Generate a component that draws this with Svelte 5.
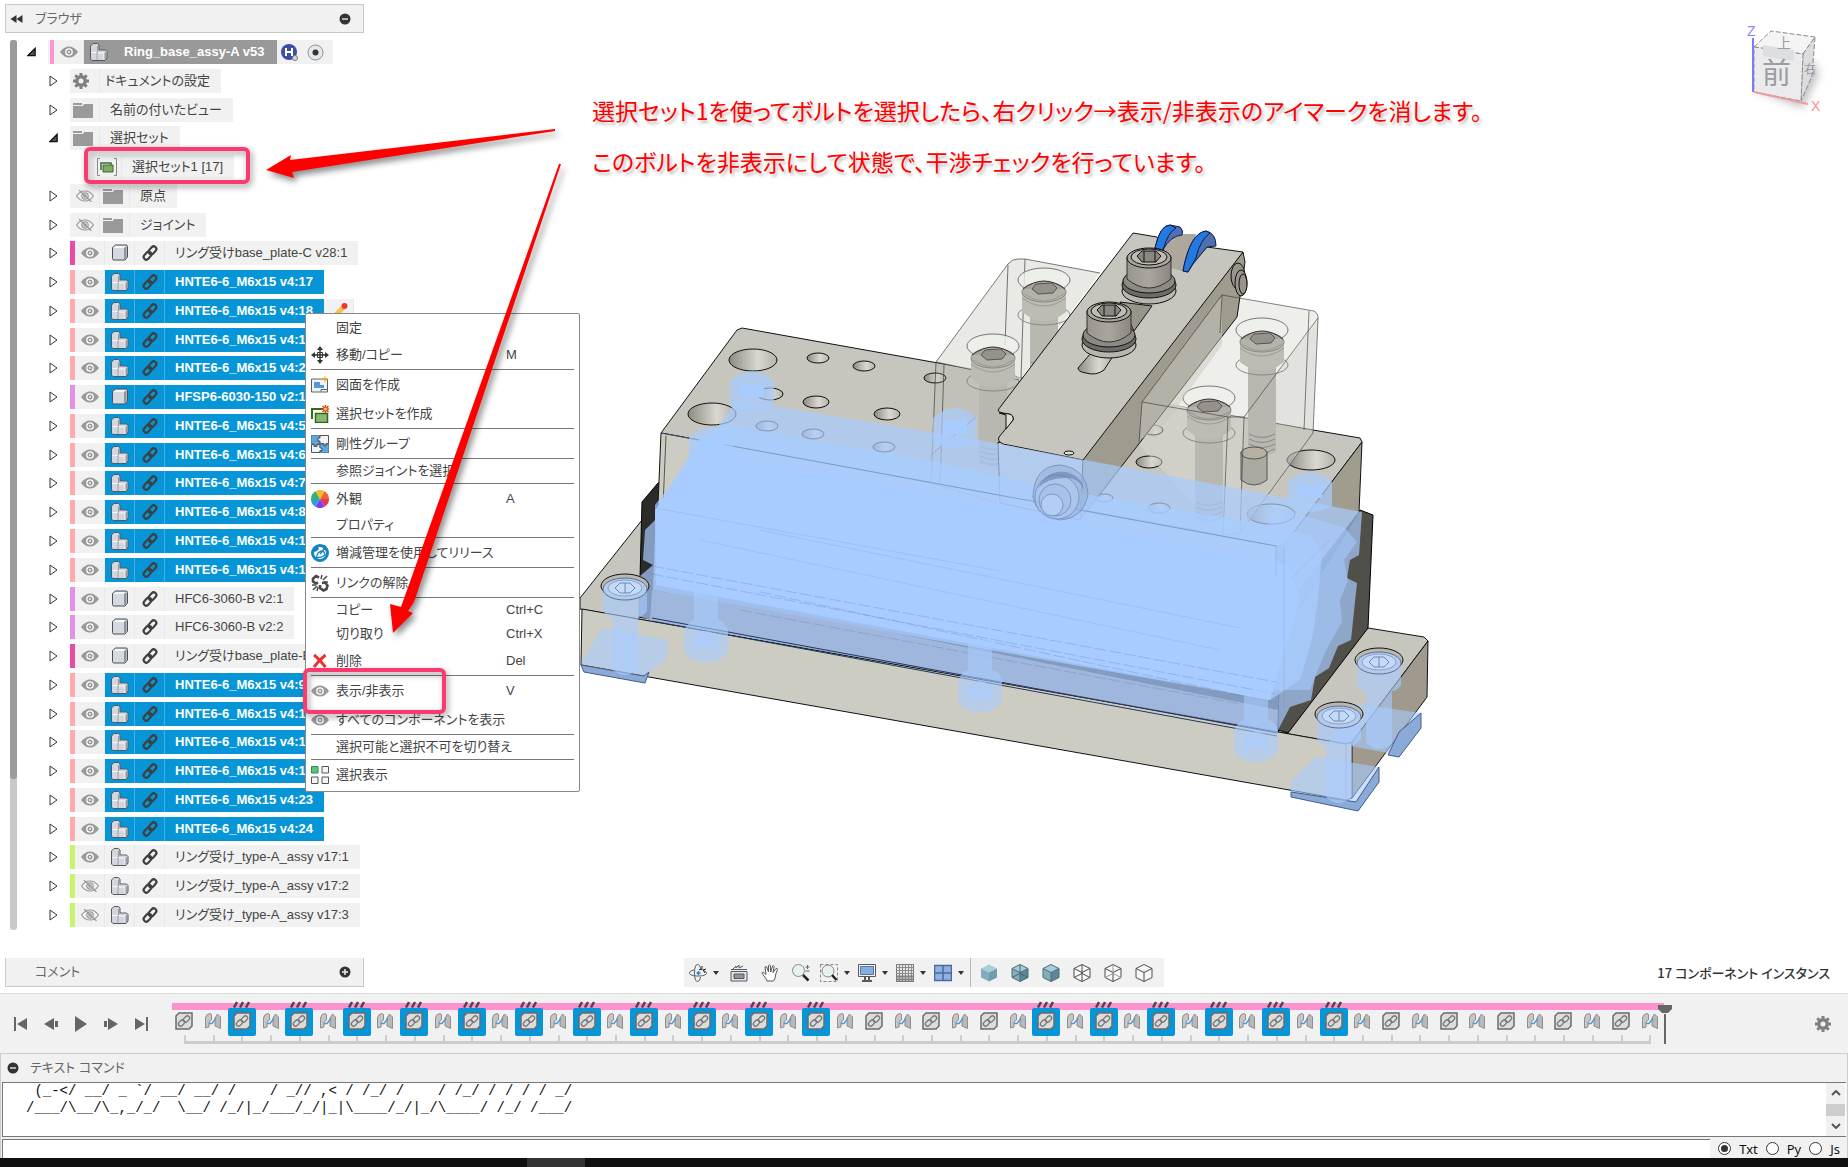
<script>
	// colours of the component stripes in the browser tree
	const PINK = '#ff94cf';
	const MAGENTA = '#ea4ba8';
	const SALMON = '#ffabab';
	const VIOLET = '#e290e8';
	const LIME = '#c5f56b';

	const bolt = (n, extra = {}) => ({
		level: 1, stripe: SALMON, eye: 'on', type: 'assy', link: true, selected: true, label: `HNTE6-6_M6x15 v4:${n}`, ...extra
	});
	const part = (label, stripe) => ({ level: 1, stripe, eye: 'on', type: 'part', link: true, label });
	const ring = (n, eye) => ({
		level: 1, stripe: LIME, eye, type: 'assy', link: true, label: `リング受け_type-A_assy v17:${n}`
	});

	const rows = [
		{ level: 0, open: true, root: true, stripe: PINK, eye: 'on', type: 'assy', label: 'Ring_base_assy-A v53' },
		{ level: 1, type: 'gear', label: 'ドキュメントの設定' },
		{ level: 1, type: 'folder', label: '名前の付いたビュー' },
		{ level: 1, open: true, type: 'folder', label: '選択セット' },
		{ level: 2, leaf: true, type: 'set', label: '選択セット1 [17]' },
		{ level: 1, eye: 'off', type: 'folder', label: '原点' },
		{ level: 1, eye: 'off', type: 'folder', label: 'ジョイント' },
		part('リング受けbase_plate-C v28:1', MAGENTA),
		bolt(17),
		bolt(18, { edited: true }),
		bolt(1),
		bolt(2),
		{ ...part('HFSP6-6030-150 v2:1', VIOLET), selected: true },
		bolt(5),
		bolt(6),
		bolt(7),
		bolt(8),
		bolt(10),
		bolt(11),
		part('HFC6-3060-B v2:1', VIOLET),
		part('HFC6-3060-B v2:2', VIOLET),
		part('リング受けbase_plate-B', MAGENTA),
		bolt(9),
		bolt(12),
		bolt(13),
		bolt(14),
		bolt(23),
		bolt(24),
		ring(1, 'on'),
		ring(2, 'off'),
		ring(3, 'off')
	];

	const menu = [
		[{ label: '固定' }, { label: '移動/コピー', icon: 'move', key: 'M' }],
		[{ label: '図面を作成', icon: 'drawing' }, { label: '選択セットを作成', icon: 'newset' }],
		[{ label: '剛性グループ', icon: 'rigid' }],
		[{ label: '参照ジョイントを選択' }],
		[{ label: '外観', icon: 'appearance', key: 'A' }, { label: 'プロパティ' }],
		[{ label: '増減管理を使用してリリース', icon: 'release' }],
		[{ label: 'リンクの解除', icon: 'unlink' }],
		[
			{ label: 'コピー', key: 'Ctrl+C' },
			{ label: '切り取り', key: 'Ctrl+X' },
			{ label: '削除', icon: 'delete', key: 'Del' }
		],
		[
			{ label: '表示/非表示', icon: 'eye', key: 'V' },
			{ label: 'すべてのコンポーネントを表示', icon: 'eye' }
		],
		[{ label: '選択可能と選択不可を切り替え' }],
		[{ label: '選択表示', icon: 'display' }]
	];

	const wheel = ['#fbb829', '#f5622e', '#e3395b', '#7b3ff2', '#2f9fd0', '#35b56a'];

	// 26 components, each one followed by its joint
	const features = Array.from({ length: 52 }, (_, i) => {
		const n = i / 2;
		return {
			joint: i % 2 === 1,
			selected: i % 2 === 0 && ((n >= 1 && n <= 11) || (n >= 15 && n <= 20))
		};
	});

	const viewTools = [
		{ icon: 'orbit', caret: true, name: 'オービット' },
		{ icon: 'look', name: 'ビュー正面' },
		{ icon: 'pan', name: '画面移動' },
		{ icon: 'zoom', name: 'ズーム' },
		{ icon: 'fit', caret: true, name: 'フィット' },
		{ icon: 'screen', caret: true, name: '表示設定' },
		{ icon: 'grid', caret: true, name: 'グリッド' },
		{ icon: 'views', caret: true, name: 'ビューポート' }
	];
	const styles = ['shaded', 'shaded-hidden', 'shaded-edges', 'wire', 'wire-hidden', 'wire-visible'];

	// [x, y, rx, ry] of the holes in the upper block
	const holes = [
		[753, 360, 24, 11], [712, 414, 24, 11], [1311, 460, 24, 10], [1271, 514, 24, 10],
		[770, 394, 13, 6], [816, 402, 13, 6], [887, 414, 13, 6],
		[818, 358, 11, 5], [864, 366, 11, 5], [935, 378, 11, 5],
		[767, 426, 11, 5], [813, 434, 11, 5], [884, 447, 11, 5],
		[1153, 430, 10, 5], [1149, 462, 13, 6], [1159, 508, 11, 5], [1104, 498, 9, 4]
	];
	// bolts seen through the clear brackets: x, y of the counterbore and y of the shaft end
	const clearBolts = [
		[1044, 280, 380], [993, 346, 464], [1262, 330, 452], [1209, 398, 520]
	];
	const armBolts = [[1149, 257], [1109, 311]];
	const headBolts = [[625, 587], [1379, 661], [1339, 715]];
	const pins = [[706, 590, 658], [980, 640, 708], [1256, 690, 758]];
	const buried = [[752, 381], [711, 437], [955, 418], [1310, 482]];

	const art = [
		' (_-</ __/ _ `/ __/ __/ /    / _// ,< / /_/ /    / /_/ / / / / _/',
		'/___/\\__/\\_,_/_/  \\__/ /_/|_/___/_/|_|\\____/_/|_/\\____/ /_/ /___/'
	].join('\n');

	let language = 'Txt';
</script>

{#snippet eye(kind)}
	<svg class="eye" viewBox="0 0 18 12" aria-hidden="true">
		{#if kind === 'on'}
			<path d="M0 6Q4 .5 9 .5T18 6Q14 11.500 9 11.500T0 6z" fill="#999" />
			<circle cx="9" cy="6" r="3.200" fill="none" stroke="#fff" stroke-width="1.300" />
			<circle cx="9" cy="6" r="1.100" fill="#eee" />
		{:else}
			<g fill="none" stroke="#999" stroke-width="1.200">
				<path d="M.5 6Q4 1 9 1t8.500 5Q14 11 9 11T.5 6z" />
				<circle cx="9" cy="6" r="3.200" />
				<circle cx="9" cy="6" r="1.200" />
				<path d="M3 0l12.500 12" />
			</g>
		{/if}
	</svg>
{/snippet}

{#snippet gear()}
	<svg class="gear" viewBox="0 0 16 16" fill="none" stroke="currentColor" aria-hidden="true">
		<circle cx="8" cy="8" r="4.200" stroke-width="3.400" />
		<path d="M8 0v3M8 13v3M0 8h3M13 8h3M2.300 2.300l2.200 2.200M11.500 11.500l2.200 2.200M13.700 2.300l-2.200 2.200M4.500 11.500l-2.200 2.200" stroke-width="3" />
	</svg>
{/snippet}

{#snippet chain()}
	<svg class="chain" viewBox="0 0 18 18" fill="none" stroke="#3f3f3f" stroke-width="2.400" aria-hidden="true">
		<rect x="-5" y="-3" width="10" height="6" rx="3" transform="translate(11.800 6) rotate(-48)" />
		<rect x="-5" y="-3" width="10" height="6" rx="3" transform="translate(6.200 12) rotate(-48)" />
	</svg>
{/snippet}

{#snippet typeIcon(type)}
	{#if type === 'gear'}
		{@render gear()}
	{:else if type === 'folder'}
		<svg class="folder" viewBox="0 0 20 16" aria-hidden="true">
			<path d="M0 1h9v2H0zM0 4h10l1-2h9v14H0z" fill="#9a9a9a" />
		</svg>
	{:else if type === 'set'}
		<svg class="set" viewBox="0 0 20 18" aria-hidden="true">
			<path d="M3 .5H.5v17H3M17 .5h2.500v17H17" fill="none" stroke="#888" />
			<path d="M4 12V5h10v2" fill="none" stroke="#40653a" stroke-width="1.500" />
			<path d="M6 7h10v7H6z" fill="#7fae5c" stroke="#40653a" />
		</svg>
	{:else if type === 'part'}
		<svg class="type" viewBox="0 0 18 18" aria-hidden="true">
			<path d="M1.500 4q0-1 1-1.500l2-1.500H15q1.500 0 1.500 1.500v10.500l-2.500 3H3q-1.500 0-1.500-1.500z" fill="#d5d9e0" stroke="#4c4f55" />
			<path d="M2.500 4L5 2h10l-2 2z" fill="#f6f7f9" />
			<path d="M13 4l2.500-2v11L13 16z" fill="#8e939c" />
		</svg>
	{:else}
		<svg class="type" viewBox="0 0 18 18" aria-hidden="true">
			<path d="M.5 3L3 .5h4.500L9 2v5h6.500L17 8.500V15l-2 2.500H2L.5 16z" fill="#d3d6dd" stroke="#55585e" />
			<path d="M1.500 9.500h5M8 10h6v6.500" fill="none" stroke="#fafafa" />
			<path d="M7 3.500L8.500 2v6L7 9.500zM14.500 10L16.500 8.500V15l-2 1.500z" fill="#959aa3" />
			<path d="M7 9.500V17M9 7.500h6" fill="none" stroke="#9ba0a8" />
		</svg>
	{/if}
{/snippet}

{#snippet menuIcon(name)}
	<svg class="menu-icon" viewBox="0 0 18 18" aria-hidden="true">
		{#if name === 'move'}
			<path d="M9 0l3 4H6zM9 18l3-4H6zM0 9l4-3v6zM18 9l-4-3v6z" fill="#333" />
			<path d="M9 3v12M3 9h12" stroke="#333" stroke-width="1.500" />
			<path d="M6.500 6.500h5v5h-5z" fill="none" stroke="#333" />
		{:else if name === 'drawing'}
			<path d="M.5 3h16v13H.5z" fill="#f2f2f2" stroke="#5a6068" />
			<path d="M3 6h6v3h4v3H3z" fill="#5897d6" />
			<path d="M10 15.500v-2h6" fill="none" stroke="#5a6068" />
			<path d="M14 0l1 2.500 3 .5-3 1-1 3-1-3-3-1 3-.5z" fill="#f5a81c" />
		{:else if name === 'newset'}
			<path d="M1 14V4h11" fill="none" stroke="#2c6e12" stroke-width="2" />
			<path d="M4.500 8.500h12v9h-12z" fill="#8db873" stroke="#2c6e12" stroke-width="1.500" />
			<path d="M14.500 0v8M10.500 4h8M11.500 1l6 6M17.500 1l-6 6" stroke="#d8421b" stroke-width="1.500" />
			<circle cx="14.500" cy="4" r="1.500" fill="#ffd64d" />
		{:else if name === 'rigid'}
			<path d="M0 0h9v3H7v3h2v3H6v2H3V9H0z" fill="#5ea6dc" stroke="#4a6680" />
			<path d="M9 .5h8.500v8H15v2h-2v-2H9V6H7V3h2z" fill="#f3f3f3" stroke="#555" />
			<path d="M.5 9.500H3v2h3v-2h3v3h2v3H9v2H.5z" fill="#f3f3f3" stroke="#555" />
			<path d="M9 9h4v2h2V9h3v9H9v-2h2v-3H9z" fill="#5ea6dc" stroke="#4a6680" />
		{:else if name === 'appearance'}
			{#each wheel as fill, i}
				<path d="M9 9L4.500 1.200A9 9 0 0 1 13.500 1.200z" {fill} transform="rotate({i * 60} 9 9)" />
			{/each}
		{:else if name === 'release'}
			<circle cx="9" cy="9" r="7.500" fill="#fff" stroke="#1384c4" stroke-width="3" />
			<path d="M2 5l4-3 2 3-2 2-3 1zM10 1h4l3 4-4 1z" fill="#1384c4" />
			<path d="M5 14l2-5 3-2 3 1 1 3-3 2z" fill="none" stroke="#1384c4" stroke-width="1.300" />
			<path d="M9 10l5-6" stroke="#1384c4" stroke-width="1.500" />
		{:else if name === 'unlink'}
			<g fill="none" stroke="#4a4a4a" stroke-width="2.600">
				<path d="M8 3.500L5 2 2 4.500v3L5 9.500l2-1M11 9l3-.5 2.500 3-1 3.500-3 1.500L9 14v-3" />
			</g>
			<path d="M10 5l1-4M12 6l4-4M13 8h4M1 11h4M2 16l4-4M6 17l1-4" stroke="#4a4a4a" stroke-width="1.500" />
		{:else if name === 'delete'}
			<path d="M3 3q3 2 11.500 12M14.500 3Q8 8 3 15" fill="none" stroke="#ee3030" stroke-width="3" />
		{:else if name === 'display'}
			<path d="M.5.500h6.500v6.500H.5z" fill="#57c77c" stroke="#2f8a50" />
			<path d="M11 .5h6.500v6.500H11zM.5 11h6.500v6.500H.5zM11 11h6.500v6.500H11z" fill="#f5f5f5" stroke="#555" />
		{/if}
	</svg>
{/snippet}

{#snippet cubeIcon(kind)}
	<svg class="tool-icon" viewBox="0 0 18 18" aria-hidden="true">
		{#if kind.startsWith('shaded')}
			<path d="M9 .5l8 4-8 4-8-4z" fill="#a9cdd8" />
			<path d="M1 4.500l8 4v9l-8-4z" fill="#83adba" />
			<path d="M17 4.500l-8 4v9l8-4z" fill={kind === 'shaded' ? '#6f9dac' : '#5b8797'} />
			{#if kind !== 'shaded'}
				<path d="M9 .5l8 4v9l-8 4-8-4v-9zM1 4.500l8 4 8-4M9 8.500v9" fill="none" stroke="#4d6a74" />
			{/if}
			{#if kind === 'shaded-hidden'}
				<path d="M9 .5v9M1 13.500l8-4 8 4" fill="none" stroke="#4a666f" />
			{/if}
		{:else}
			<path d="M9 .5l8 4v9l-8 4-8-4v-9zM1 4.500l8 4 8-4M9 8.500v9" fill="#f8f8f8" stroke="#4a4a4a" />
			{#if kind !== 'wire-visible'}
				<path d="M9 .5v9M1 13.500l8-4 8 4" fill="none" stroke={kind === 'wire' ? '#4a4a4a' : '#999'} />
			{/if}
		{/if}
	</svg>
{/snippet}

{#snippet toolIcon(name)}
	<svg class="tool-icon" viewBox="0 0 18 18" fill="none" stroke="#55585e" aria-hidden="true">
		{#if name === 'orbit'}
			<path d="M12 5.500C11 2 10 .5 8.500.500 6.500.500 5.500 4 5.500 9s1 8.500 3 8.500c1.500 0 2.500-2 3-4.500" />
			<path d="M5 6C2 6.500.5 7.800.5 9c0 2 4 3 8.500 3s8.500-1 8.500-3c0-1-1-2-3-2.500" />
			<path d="M9.500 7v4M7.500 9h4" stroke="#2080c8" stroke-width="1.500" />
			<path d="M13 2v3.500h-3M17 5l-3 1 2 3" stroke="#222" />
		{:else if name === 'look'}
			<path d="M1 7.500h16v9.500H1z" fill="#e4e6ea" />
			<path d="M4 10h10v4.500H4z" fill="#8c949f" />
			<path d="M1 5.500h16M3 5l3-3v2l3-3v3l4-2" />
		{:else if name === 'pan'}
			<path d="M6 17q-1-3-3-5L.8 9q.7-1.500 2-.5L5 10.500 4 3q1.200-1 1.800 0L7.500 8V1.500q1-1.200 1.800 0L9.700 8l1.800-6q1.200-.8 1.600.4L12 8.700 15 4.500q1.400-.5 1.500.8L14.500 11q0 4-2 6z" fill="#fff" />
		{:else if name === 'zoom'}
			<circle cx="6.500" cy="6.500" r="6" fill="#e6f2ef" stroke="#888" />
			<path d="M11 11l5.500 5.500" stroke="#222" stroke-width="2.500" />
			<path d="M13.500 3h4M15.500 1v4M13.500 7h4" stroke="#666" />
		{:else if name === 'fit'}
			<path d="M.5.500h17v17H.5z" stroke="#888" stroke-dasharray="3 2" />
			<circle cx="8" cy="7" r="6" fill="#e6f2ef" stroke="#888" />
			<path d="M12 11l4.500 5" stroke="#222" stroke-width="2.500" />
		{:else if name === 'screen'}
			<path d="M.5.500h17v12H.5z" fill="#f3f3f3" />
			<path d="M2.500 2.500h13v8h-13z" fill="#86aede" stroke="#5377ad" />
			<path d="M7 13v3M11 13v3M4 17h10" stroke-width="2" />
		{:else if name === 'grid'}
			<path d="M.5.500h17v17H.5z" fill="#e8e8e8" stroke="#777" />
			<path d="M0 3.500h18M0 6.500h18M0 9.500h18M0 12.500h18M0 15.500h18M3.500 0v18M6.500 0v18M9.500 0v18M12.500 0v18M15.500 0v18" stroke="#8a8a8a" />
			<path d="M0 11h18v7H0z" fill="#777" fill-opacity=".45" stroke="none" />
		{:else}
			<path d="M.5 1.500h17v15H.5z" fill="#8fb1de" stroke="#4a69a0" stroke-width="1.500" />
			<path d="M9 1v16M0 9h18" stroke="#4a69a0" stroke-width="1.500" />
		{/if}
	</svg>
{/snippet}

<div class="app">
	<main class="workspace">
		<svg class="canvas" role="img" aria-label="Ring_base_assy-A">
			<defs>
				<linearGradient id="bore">
					<stop offset="0" stop-color="#8d8a80" />
					<stop offset=".6" stop-color="#dad8d0" />
					<stop offset="1" stop-color="#b5b3aa" />
				</linearGradient>
				<linearGradient id="steel">
					<stop offset="0" stop-color="#9a958d" />
					<stop offset=".5" stop-color="#aaa59d" />
					<stop offset="1" stop-color="#8b867f" />
				</linearGradient>
			</defs>

			<!-- base plate -->
			<g stroke="#111" stroke-linejoin="round">
				<path d="M580 598L642 520 700 500 1368 628 1424 637 1428 641 1352 742 1346 744 580 609z" fill="#c6c6be" />
				<path d="M582 609L1346 744 1352 742V798L1346 800 581 665z" fill="#cdccc3" />
				<path d="M1428 641L1427 697 1352 798V742z" fill="#9f9a8d" />
			</g>
			<path d="M1346 744v55" stroke="#9a978d" />

			<!-- dark plate -->
			<g stroke="#000">
				<path d="M642 502L658 483 1360 512 1278 732 639 617z" fill="#2b2b29" />
				<path d="M1360 510L1373 515 1368 628 1288 733 1278 730 1280 640z" fill="#514f49" />
			</g>

			<!-- upper block -->
			<g stroke="#111" stroke-linejoin="round">
				<path d="M661 433L737 330 742 328 1313 430 1360 438 1362 442 1284 545 1276 546z" fill="#c6c6be" />
				<path d="M661 433L1276 546V640L658 505z" fill="#cdccc3" />
				<path d="M1362 442L1359 512 1284 610V545z" fill="#a09c8e" />
			</g>
			<path d="M666 436l-3 70" stroke="#555" />
			{#each holes as [cx, cy, rx, ry]}
				<ellipse {cx} {cy} {rx} {ry} fill="url(#bore)" stroke="#111" />
			{/each}

			<!-- left clear bracket -->
			<path d="M1010 262Q1013 259 1018 259L1025 259 1100 273 1019 381 936 362z" fill="#e3e4de" fill-opacity=".8" />
			<path d="M936 362L1019 381 1000 410 997 495 931 483z" fill="#aaa" fill-opacity=".18" />
			<g fill="none" stroke="#333" stroke-opacity=".65">
				<path d="M936 362L1008 264Q1012 259 1018 259L1025 259 1100 273M936 362L1019 380M936 362L931 483M944 365L940 485M1008 265L1005 345M1025 259L1021 378M931 455L976 417M931 483L997 503" />
			</g>

			<!-- right clear bracket -->
			<path d="M1222 295L1314 311Q1319 314 1318 320L1313 433 1242 533 1223 535 1139 445 1142 402z" fill="#dcdcd5" fill-opacity=".45" />
			<path d="M1222 295L1314 311Q1319 314 1318 320L1244 417 1142 402z" fill="#ecede9" fill-opacity=".55" />
			<path d="M1244 417L1318 320 1313 433 1240 533z" fill="#999" fill-opacity=".15" />

			{#each clearBolts as [x, y, end]}
				<ellipse cx={x} cy={y} rx="26" ry="12" fill="#eef0ec" fill-opacity=".8" stroke="#777" />
				<path d="M{x - 14} {y + 30}V{end}Q{x} {end + 6} {x + 14} {end}V{y + 30}z" fill="#b9b8b0" />
				<ellipse cx={x} cy={y + 35} rx="26" ry="10" fill="none" stroke="#888" />
				<path d="M{x - 22} {y + 12}V{y + 32}Q{x} {y + 50} {x + 22} {y + 32}V{y + 12}z" fill="#bdbcb4" />
				<ellipse cx={x} cy={y + 12} rx="22" ry="10" fill="#b4b2a9" stroke="#888" />
				<path d="M{x - 21} {y + 9}q21-16 42 0" fill="#a8a49b" stroke="#333" />
				<path d="M{x - 12} {y + 9}l4-5 16-1 5 5-4 5-15 1z" fill="#96928b" stroke="#555" />
				<path d="M{x - 22} {y + 18}q22 16 44 0M{x - 20} {y + 14}q20 14 40 0" fill="none" stroke="#999" />
				<path d="M{x - 13} {end - 18}q13 7 26 0m-26 5q13 7 26 0m-26 5q13 7 26 0m-26 5q13 7 26 0" fill="none" stroke="#888" />
			{/each}
			<path d="M1241 452v28q13 10 26 0v-28" fill="#98968c" fill-opacity=".6" stroke="#555" />
			<ellipse cx="1254" cy="453" rx="13" ry="6" fill="#b9b0a4" stroke="#555" />

			<!-- clamp arm -->
			<g stroke="#111" stroke-linejoin="round">
				<path d="M1243 252L1245 262 1237 317 1080 520V460z" fill="#9f9b8e" />
				<path d="M998 442L1083 460 1080 520 1000 503z" fill="#cbcac2" />
				<path d="M998 410L1133 233 1157 237 1185 271 1207 247 1243 252 1083 460 1003 444Q997 441 999 437L1013 420Q1014 415 1009 414L1003 413Q998 412 998 410z" fill="#c6c6be" />
			</g>
			<path d="M999 413L1009 414Q1014 415 1013 420L1006 429V415z" fill="#dedcd5" stroke="#111" />
			<path d="M1222 295L1142 402 1140 440 1165 424 1222 345z" fill="#c9c8c0" fill-opacity=".5" />
			<g fill="none" stroke="#333" stroke-opacity=".6">
				<path d="M1222 295L1314 311Q1319 314 1318 320L1313 433 1240 533 1223 535 1083 510M1222 295L1142 402 1139 442M1222 295L1220 333M1142 402L1228 417 1244 417 1318 318M1228 417L1223 535M1244 417L1240 533M1309 311L1304 430" />
			</g>

			<!-- roller -->
			<path d="M1164 250Q1166 238 1176 234H1196L1190 262 1182 271 1164 266z" fill="#aea89c" />
			<g stroke="#0b1f4d">
				<path d="M1155 248Q1160 225 1170 225L1180 227Q1184 231 1182 235 1170 236 1163 250z" fill="#4e70b4" />
				<path d="M1155 248Q1160 225 1170 225L1176 228Q1168 232 1163 250z" fill="#2478e0" />
				<path d="M1183 271Q1190 233 1206 231 1216 233 1216 246L1207 247 1193 264 1188 272z" fill="#4e6fb0" />
				<path d="M1183 271Q1190 233 1206 231L1210 233Q1200 240 1196 258L1188 272z" fill="#2478e0" />
			</g>
			<g fill="#98948a" stroke="#111">
				<ellipse cx="1238" cy="276" rx="7" ry="13" />
				<ellipse cx="1241" cy="283" rx="6" ry="13" />
				<ellipse cx="1243" cy="284" rx="4" ry="10" />
			</g>

			<path d="M1078 368L1092 352 1113 356 1104 370Q1096 376 1086 373 1078 372 1078 368z" fill="url(#bore)" stroke="#111" />
			<path d="M1120 302L1152 306 1134 331z" fill="#98958a" stroke="#111" />
			{#each armBolts as [x, y]}
				<ellipse cx={x} cy={y + 34} rx="27" ry="13" fill="#b9b6ad" stroke="#111" />
				<ellipse cx={x} cy={y + 28} rx="27" ry="13" fill="#6d6b66" stroke="#111" />
				<ellipse cx={x} cy={y + 24} rx="26" ry="12" fill="#8d8a84" stroke="#111" />
				<path d="M{x - 22} {y}V{y + 22}Q{x} {y + 40} {x + 22} {y + 22}V{y}z" fill="url(#steel)" stroke="#333" />
				<ellipse cx={x} cy={y + 1} rx="22" ry="10" fill="#a9a59e" stroke="#111" />
				<ellipse cx={x} cy={y} rx="18" ry="8" fill="#c0bdb5" stroke="#111" />
				<path d="M{x - 12} {y - 1}l5-5 14 0 5 5-5 6-14 0z" fill="#8a8680" stroke="#111" />
				<path d="M{x - 5} {y - 6}v11M{x + 6} {y - 6}v11" stroke="#111" />
			{/each}
			<ellipse cx="1069" cy="453" rx="5" ry="2" fill="#ddd" stroke="#111" />

			<!-- selected parts show through in blue -->
			<g fill="#a8ccff">
				<g fill-opacity=".7">
					<path d="M723 420L737 400 990 442 1362 512 1359 555 1350 560 1347 578 1357 583 1351 640 1338 646 1329 668 1315 677 1311 700 1290 707 1277 732 650 620 638 616 640 576 653 565 643 560 645 530 655 520V505L690 460z" />
				</g>
				<path d="M656 510L680 470 697 442 723 424 800 438 936 462 1060 490 1240 520 1310 535 1322 553 1318 600 1312 640 1300 680 1270 700 653 590z" fill-opacity=".75" />
				<path d="M655 510L680 476 705 455 800 468 1000 506 1290 566 1300 600 1270 700 656 585z" />
				<path d="M1270 505L1345 528 1357 542 1344 560 1348 580 1340 600 1342 622 1326 650 1310 690 1250 690z" fill-opacity=".55" />
			</g>
			<path d="M652 590L820 618 1278 710 1277 731 650 620z" fill="#a4bbe2" fill-opacity=".85" />
			<g fill="none" stroke="#5d7fb0" stroke-opacity=".55">
				<path d="M661 433L1276 546" />
				<path d="M652 566L1276 682M652 574L1276 694M760 592L1276 703M740 610L1240 704" stroke-opacity=".3" stroke-dasharray="12 3" />
				<path d="M760 530L1240 628M700 540L1220 650M655 508L1000 571" stroke-opacity=".15" />
				<path d="M1284 548v160M1276 546v30M1330 540l-40 40" stroke-opacity=".15" />
			</g>
			<path d="M652 618L1277 733M652 621L1277 736" stroke="#22375c" fill="none" />

			<!-- pivot on the arm's front -->
			<g stroke="#7c97c2" fill-opacity=".6">
				<path d="M1033 497Q1034 466 1060 465 1086 468 1088 494 1084 518 1060 520 1036 516 1033 497z" fill="#96b0d8" />
				<circle cx="1057" cy="497" r="22" fill="#b4cbee" />
				<path d="M1038 488q8-18 28-16 16 4 18 18-6-14-20-12-16 0-26 10z" fill="#647fac" stroke="none" />
				<circle cx="1055" cy="500" r="16" fill="#a4c0ea" />
				<circle cx="1052" cy="505" r="11" fill="#bcd6fb" />
			</g>

			{#each buried as [x, y]}
				<path d="M{x - 22} {y}Q{x} {y - 20} {x + 22} {y}V{y + 24}Q{x} {y + 36} {x - 22} {y + 24}z" fill="#a8ccff" fill-opacity=".7" />
				<path d="M{x - 12} {y}q12 8 24 0v16h-24z" fill="#a8ccff" />
			{/each}
			{#each pins as [x, y, end]}
				<g fill="#a8ccff" fill-opacity=".6">
					<path d="M{x - 22} {end - 28}q6-10 10-10V{y}h24v{end - 38 - y}q6 0 10 10V{end - 8}Q{x + 18} {end + 4} {x} {end + 4}T{x - 22} {end - 8}z" />
					<path d="M{x - 12} {end - 20}q12-14 24 0v14q-12-8-24 0z" />
				</g>
			{/each}

			<!-- feet and their bolts -->
			<g fill="#a8ccff" fill-opacity=".6">
				<path d="M602 628L668 640 666 660 644 676 581 663z" />
				<path d="M1351 703L1421 713 1399 755 1329 742z" />
				<path d="M1315 757L1379 767 1358 808 1291 795V782z" />
			</g>
			<g fill="#8caad8" stroke="#3f5c8c">
				<path d="M581 665L644 676 649 672 645 683 584 672z" />
				<path d="M1421 713V728L1399 757 1388 755 1399 732z" />
				<path d="M1379 767V782L1358 811 1291 797V792L1356 802z" />
			</g>
			{#each headBolts as [x, y]}
				<ellipse cx={x} cy={y - 1} rx="24" ry="12" fill="#bbb9ae" stroke="#111" />
				<path d="M{x - 22} {y}V{y + 24}Q{x - 18} {y + 30} {x - 13} {y + 30}V{y + 82}Q{x} {y + 94} {x + 13} {y + 82}V{y + 30}Q{x + 18} {y + 30} {x + 22} {y + 24}V{y}z" fill="#a8ccff" fill-opacity=".62" />
				<ellipse cx={x} cy={y + 2} rx="22" ry="11" fill="#b5cbec" stroke="#56719c" />
				<ellipse cx={x} cy={y + 1} rx="17" ry="8" fill="#c4daf9" stroke="#8aa2c8" />
				<path d="M{x - 10} {y + 1}l5-5 10 0 5 5-5 5-10 0zM{x} {y - 4}v10" fill="none" stroke="#7088b0" />
			{/each}
		</svg>

		<section class="browser">
			<header class="panel-head">
				<button class="plain collapse" aria-label="折りたたむ">
					<svg viewBox="0 0 12 8"><path d="M6 0v8L0 4zM12 0v8L6 4z" fill="#333" /></svg>
				</button>
				<h2>ブラウザ</h2>
				<button class="plain round" aria-label="最小化">
					<svg viewBox="0 0 12 12"><circle cx="6" cy="6" r="5.500" fill="#333" /><path d="M3 6h6" stroke="#ddd" stroke-width="1.500" /></svg>
				</button>
			</header>

			<div class="tree">
				<div class="rail"><div class="thumb"></div></div>
				<ul>
					{#each rows as row}
						<li class="level-{row.level}" class:root={row.root} class:selected={row.selected}>
							{#if row.leaf}
								<span class="arrow"></span>
							{:else}
								<button class="plain arrow" aria-label={row.open ? '閉じる' : '開く'}>
									{#if row.open}
										<svg class="open" viewBox="0 0 10 10"><path d="M9 1v8H1z" fill="#555" stroke="#111" stroke-width="1.500" /></svg>
									{:else}
										<svg viewBox="0 0 9 12"><path d="M1 1l7 5-7 5z" fill="#fff" stroke="#333" /></svg>
									{/if}
								</button>
							{/if}
							{#if row.stripe}<span class="stripe" style="background-color: {row.stripe}"></span>{/if}
							{#if row.eye}
								<button class="plain cell" aria-label="表示切り替え">{@render eye(row.eye)}</button>
							{/if}
							<span class="cell type-cell">{@render typeIcon(row.type)}</span>
							{#if row.link}<span class="cell link-cell">{@render chain()}</span>{/if}
							<span class="label" class:narrow={row.type === 'gear'}>{row.label}</span>
							{#if row.edited}
								<span class="cell">
									<svg class="type" viewBox="0 0 18 18"><path d="M2 17l1.500-5L11 4l4 3.500L7 15z" fill="#f7c14a" /><path d="M2 17l1-3 2 2z" fill="#555" /><circle cx="14.500" cy="4" r="3" fill="#f03434" /></svg>
								</span>
							{/if}
							{#if row.root}
								<span class="badges">
									<svg viewBox="0 0 17 17">
										<circle cx="8" cy="8" r="8" fill="#3c4ea6" />
										<path d="M5 4v8M11 4v8M5 8h6" stroke="#fff" stroke-width="2" />
										<circle cx="14" cy="14" r="2.500" fill="#ddd" stroke="#777" />
									</svg>
									<svg viewBox="0 0 17 17">
										<circle cx="8.500" cy="8.500" r="7.500" fill="#e5e9ee" stroke="#8b9097" />
										<circle cx="8.500" cy="8.500" r="3" fill="#333" />
									</svg>
								</span>
							{/if}
						</li>
					{/each}
				</ul>
			</div>
		</section>

		<svg class="viewcube" viewBox="0 0 100 130" role="img" aria-label="前">
			<defs>
				<filter id="soft" x="-30%" y="-30%" width="160%" height="160%"><feGaussianBlur stdDeviation="4" /></filter>
			</defs>
			<path d="M12 90L60 108 76 74 70 60z" fill="#999" fill-opacity=".6" filter="url(#soft)" />
			<g stroke="#8b8b8b" stroke-dasharray="5 2">
				<path d="M11 47L28 31 72 37 60 54z" fill="#f4f4f4" />
				<path d="M60 54L72 37 69 76 58 101z" fill="#dcdcde" />
				<path d="M11 47L60 54 58 101 11 92z" fill="#ebebed" />
			</g>
			<path d="M20 45l31 5v11l-31-5z" fill="#dcdee2" />
			<text x="19" y="84" font-size="29" fill="#9a9da2">前</text>
			<text x="34" y="48" font-size="14" fill="#9a9da2">上</text>
			<text x="61" y="74" font-size="12" fill="#9a9da2">右</text>
			<path d="M10 38v54" stroke="#7b7bff" stroke-width="2" />
			<path d="M11 92l54 12" stroke="#f09a9a" stroke-width="2" />
			<text x="4" y="36" font-size="14" fill="#8585ff">Z</text>
			<text x="68" y="111" font-size="14" fill="#ff8a8a">X</text>
		</svg>

		<header class="panel-head comments">
			<h2>コメント</h2>
			<button class="plain round" aria-label="コメントを追加">
				<svg viewBox="0 0 12 12"><circle cx="6" cy="6" r="5.500" fill="#333" /><path d="M3 6h6M6 3v6" stroke="#eee" stroke-width="1.500" /></svg>
			</button>
		</header>

		<nav class="viewbar">
			{#each viewTools as tool}
				<button class="plain tool" class:wide={tool.caret} aria-label={tool.name}>
					{@render toolIcon(tool.icon)}
					{#if tool.caret}<svg class="caret" viewBox="0 0 6 4"><path d="M0 0h6L3 4z" fill="#333" /></svg>{/if}
				</button>
			{/each}
			<span class="divider"></span>
			{#each styles as kind}
				<button class="plain tool" aria-label={kind}>{@render cubeIcon(kind)}</button>
			{/each}
		</nav>

		<p class="count">17 コンポーネント インスタンス</p>

		<div class="context-menu" role="menu">
			{#each menu as group}
				<div class="group" role="group">
					{#each group as item}
						<button class="plain item" class:tall={item.icon} role="menuitem">
							<span class="item-icon">
								{#if item.icon === 'eye'}{@render eye('on')}{:else if item.icon}{@render menuIcon(item.icon)}{/if}
							</span>
							<span class="item-label">{item.label}</span>
							{#if item.key}<kbd>{item.key}</kbd>{/if}
						</button>
					{/each}
				</div>
			{/each}
		</div>

		<div class="frame frame-set"></div>
		<div class="frame frame-visibility"></div>
		<svg class="arrows" aria-hidden="true">
			<path d="M266 170L291 155 290 160 555 129V131L292 172 294 178z" />
			<path d="M393 633L390 604 401 607 559 164H561L414 602 408 611 413 613z" />
		</svg>
		<div class="note">
			<p>選択セット1を使ってボルトを選択したら、右クリック→表示/非表示のアイマークを消します。</p>
			<p>このボルトを非表示にして状態で、干渉チェックを行っています。</p>
		</div>
	</main>

	<section class="timeline">
		<div class="playback">
			<button class="plain" aria-label="最初へ"><svg viewBox="0 0 14 14"><path d="M0 0h2v14H0zM13 1v12L3 7z" /></svg></button>
			<button class="plain" aria-label="前へ"><svg viewBox="0 0 14 14"><path d="M10 1v12L0 7zM11 4h3v6h-3z" /></svg></button>
			<button class="plain" aria-label="再生"><svg viewBox="0 0 14 14"><path d="M1-1l12 8-12 8z" /></svg></button>
			<button class="plain" aria-label="次へ"><svg viewBox="0 0 14 14"><path d="M4 1v12l10-6zM0 4h3v6H0z" /></svg></button>
			<button class="plain" aria-label="最後へ"><svg viewBox="0 0 14 14"><path d="M12 0h2v14h-2zM1 1v12l10-6z" /></svg></button>
		</div>
		<div class="track">
			<div class="history"></div>
			<ol>
				{#each features as feature}
					<li class:on={feature.selected}>
						{#if feature.selected}
							<svg class="ticks" viewBox="0 0 18 7"><path d="M1 6.500L4 1M7 6.500L10 1M13 6.500L16 1" stroke="#4c4650" stroke-width="2.500" /></svg>
						{/if}
						<span class="feature">
							{#if feature.joint}
								<svg viewBox="0 0 18 18">
									<path d="M1.500 16V6Q2 2 6 1.500l1.500 1V8L5 10v5z" fill="#c6c6c6" stroke="#8e8e8e" />
									<path d="M11 6l2.500-4 3 3v11.500L11 14z" fill="#b9b9b9" stroke="#8e8e8e" />
									<path d="M5 11.500h3l4-5" fill="none" stroke="#4c9ad4" stroke-width="1.500" />
								</svg>
							{:else}
								<svg viewBox="0 0 18 18">
									<path d="M1 4l3-3h13v13l-3 3H1z" fill="#dcdcdc" stroke="#6b6b6b" stroke-width="1.500" />
									<g fill="none" stroke="#777" stroke-width="1.300">
										<rect x="-3.500" y="-2.200" width="7" height="4.400" rx="2.200" transform="translate(11.500 7) rotate(-45)" />
										<rect x="-3.500" y="-2.200" width="7" height="4.400" rx="2.200" transform="translate(6.500 11) rotate(-45)" />
									</g>
								</svg>
							{/if}
						</span>
					</li>
				{/each}
			</ol>
			<svg class="playhead" viewBox="0 0 14 39"><path d="M0 0h14v4l-4 4H4L0 4zM6 9h2v30H6z" fill="#666" /></svg>
		</div>
		<button class="plain settings" aria-label="タイムラインの設定">{@render gear()}</button>
	</section>

	<section class="console">
		<header>
			<button class="plain round" aria-label="最小化">
				<svg viewBox="0 0 12 12"><circle cx="6" cy="6" r="5.500" fill="#333" /><path d="M3 6h6" stroke="#ddd" stroke-width="1.500" /></svg>
			</button>
			<h2>テキスト コマンド</h2>
		</header>
		<div class="output">
			<pre>{art}</pre>
			<div class="scroll">
				<button class="plain" aria-label="上へ"><svg viewBox="0 0 10 6"><path d="M1 5l4-4 4 4" /></svg></button>
				<span class="scroll-thumb"></span>
				<button class="plain" aria-label="下へ"><svg viewBox="0 0 10 6"><path d="M1 1l4 4 4-4" /></svg></button>
			</div>
		</div>
		<div class="entry">
			<input type="text" aria-label="テキスト コマンド" />
			{#each ['Txt', 'Py', 'Js'] as name}
				<label><input type="radio" name="language" value={name} bind:group={language} />{name}</label>
			{/each}
		</div>
	</section>

	<div class="taskbar"><span></span></div>
</div>

<style>
	:global(body) {
		margin: 0;
		background: #fff;
	}

	.app {
		display: flex;
		flex-direction: column;
		height: 100vh;
		overflow: hidden;
		font: 13px/16px 'Liberation Sans', 'Noto Sans CJK JP', sans-serif;
		font-feature-settings: 'palt';
		color: #444;
	}

	h2,
	p,
	ul,
	ol,
	pre {
		margin: 0;
		padding: 0;
		list-style: none;
	}

	h2 {
		font-size: 13px;
		font-weight: 400;
		color: #666;
	}

	svg {
		display: block;
		flex: none;
	}

	.plain {
		display: flex;
		align-items: center;
		justify-content: center;
		padding: 0;
		border: 0;
		background: none;
		font: inherit;
		font-feature-settings: inherit;
		color: inherit;
	}

	/* workspace */
	.workspace {
		position: relative;
		flex: 1;
		min-height: 0;
		display: grid;
		grid-template-columns: 1fr auto 1fr;
		grid-template-rows: minmax(0, 1fr) 29px;
		row-gap: 28px;
		padding: 4px 5px 6px;
		box-sizing: border-box;
	}

	.canvas,
	.arrows {
		position: absolute;
		inset: 0;
		width: 100%;
		height: 100%;
	}

	.browser {
		position: relative;
		display: flex;
		flex-direction: column;
		gap: 7px;
	}

	.panel-head {
		position: relative;
		display: flex;
		align-items: center;
		width: 359px;
		height: 29px;
		box-sizing: border-box;
		padding: 0 12px 0 4px;
		border: 1px solid #c8c8c8;
		background: #f1f1f1;
	}

	.panel-head h2 {
		flex: 1;
		padding-left: 12px;
	}

	.comments {
		grid-row: 2;
		padding-left: 17px;
		border-top: 0;
	}

	.collapse svg {
		width: 13px;
		height: 8px;
	}

	.round svg {
		width: 12px;
		height: 12px;
	}

	.tree {
		flex: 1;
		min-height: 0;
		display: flex;
		gap: 6px;
		padding-left: 5px;
	}

	.rail {
		width: 7px;
		border-radius: 3px;
		background: #c6c8ca;
	}

	.thumb {
		height: 83%;
		border-radius: 3px;
		background: #9b9b9b;
	}

	.tree ul {
		display: flex;
		flex-direction: column;
		justify-content: space-between;
		padding-bottom: 3px;
	}

	.tree li {
		display: flex;
		height: 24px;
	}

	.level-1 {
		padding-left: 22px;
	}

	.level-2 {
		padding-left: 44px;
	}

	.arrow {
		width: 25px;
	}

	.arrow svg {
		width: 9px;
		height: 12px;
		margin-right: 8px;
	}

	.arrow .open {
		height: 10px;
	}

	.stripe {
		width: 5px;
	}

	.root .stripe {
		width: 4px;
		border-left: 2px solid #f1f1f1;
	}

	.cell {
		display: flex;
		align-items: center;
		justify-content: center;
		width: 30px;
		box-sizing: border-box;
		border-right: 1px solid #e8e8e8;
		background: #f1f1f1;
	}

	.label {
		display: flex;
		align-items: center;
		padding: 0 11px 0 10px;
		background: #f1f1f1;
		white-space: nowrap;
	}

	.root .label {
		padding-right: 13px;
	}

	.narrow {
		padding-left: 5px;
	}

	.selected .type-cell,
	.selected .link-cell,
	.selected .label {
		border-color: #4bb0e0;
		background: #0696d7;
		font-weight: 700;
		color: #fff;
	}

	.root .type-cell,
	.root .label {
		border: 0;
		background: #999;
		font-weight: 700;
		color: #fff;
	}

	.badges {
		display: flex;
		align-items: center;
		gap: 9px;
		padding: 0 9px 0 4px;
		background: #f1f1f1;
	}

	.badges svg {
		width: 17px;
		height: 17px;
	}

	.eye {
		width: 18px;
		height: 12px;
	}

	.gear,
	.chain {
		width: 16px;
		height: 16px;
	}

	.gear {
		color: #808080;
	}

	.type-cell .gear {
		margin-right: 8px;
	}

	.folder,
	.set {
		width: 20px;
		height: 16px;
	}

	.folder {
		margin-right: 3px;
	}

	.set {
		height: 18px;
	}

	.type {
		width: 18px;
		height: 18px;
	}

	.viewcube {
		position: relative;
		grid-column: 3;
		justify-self: end;
		width: 100px;
		height: 130px;
		margin-top: -4px;
	}

	.viewbar {
		position: relative;
		display: flex;
		grid-row: 2;
		grid-column: 2;
		padding: 0 5px 0 1px;
		background: #f1f1f1;
	}

	.tool {
		width: 31px;
		gap: 6px;
	}

	.wide {
		width: 38px;
	}

	.tool-icon {
		width: 18px;
		height: 18px;
	}

	.caret {
		width: 6px;
		height: 4px;
	}

	.divider {
		width: 1px;
		margin: 0 2px;
		background: #bbb;
	}

	.count {
		position: relative;
		grid-row: 2;
		grid-column: 3;
		justify-self: end;
		align-self: center;
		padding-right: 13px;
		font: 500 13px/16px 'Noto Sans CJK JP', sans-serif;
		font-feature-settings: 'palt';
		color: #333;
	}

	/* context menu */
	.context-menu {
		position: absolute;
		top: 313px;
		left: 305px;
		width: 275px;
		box-sizing: border-box;
		padding: 2px 5px;
		border: 1px solid #888;
		border-radius: 2px;
		background: #fff;
	}

	.group + .group {
		border-top: 1px solid #777;
	}

	.item {
		width: 100%;
		height: 24px;
		justify-content: flex-start;
		text-align: left;
		white-space: nowrap;
	}

	.tall {
		height: 29px;
	}

	.item-icon {
		flex: none;
		width: 25px;
	}

	.item-label {
		flex: 1;
	}

	.menu-icon {
		width: 18px;
		height: 18px;
	}

	kbd {
		width: 68px;
		font: inherit;
	}

	/* annotations */
	.frame {
		position: absolute;
		box-sizing: border-box;
		border: 4px solid #fb3a70;
		border-radius: 6px;
		filter: drop-shadow(2px 3px 3px rgba(0, 0, 0, 0.4));
	}

	.frame-set {
		top: 147px;
		left: 84px;
		width: 166px;
		height: 37px;
	}

	.frame-visibility {
		top: 668px;
		left: 303px;
		width: 143px;
		height: 46px;
	}

	.arrows {
		fill: #f00;
		filter: drop-shadow(3px 4px 3px rgba(0, 0, 0, 0.45));
		pointer-events: none;
	}

	.note {
		position: absolute;
		top: 85px;
		left: 592px;
		font: 23px/51px 'Noto Sans CJK JP', sans-serif;
		font-feature-settings: 'palt';
		color: #f00;
		text-shadow: 2px 3px 3px rgba(0, 0, 0, 0.25);
		white-space: nowrap;
	}

	/* timeline */
	.timeline {
		display: flex;
		height: 60px;
		box-sizing: border-box;
		border-top: 1px solid #ddd;
		background: #f1f1f1;
	}

	.playback {
		display: flex;
		align-items: center;
		gap: 16px;
		width: 170px;
		box-sizing: border-box;
		padding-left: 14px;
	}

	.playback svg {
		width: 14px;
		height: 14px;
		overflow: visible;
		fill: #666;
	}

	.track {
		position: relative;
		flex: 1;
		padding-top: 9px;
	}

	.history {
		height: 7px;
		margin-left: 2px;
		background: #fc92ce;
	}

	.track ol {
		display: grid;
		grid-template-columns: repeat(52, minmax(0, 1fr));
	}

	.track li {
		position: relative;
		display: flex;
		flex-direction: column;
		align-items: center;
		height: 34px;
		box-sizing: border-box;
		border-bottom: 3px solid #ccc;
	}

	.track li::before {
		content: '';
		position: absolute;
		bottom: 0;
		left: 14px;
		width: 2px;
		height: 6px;
		background: #ccc;
	}

	.track li:first-child,
	.track li:last-child {
		border-bottom-color: transparent;
	}

	.track li:first-child::after,
	.track li:last-child::after {
		content: '';
		position: absolute;
		bottom: -3px;
		left: 14px;
		right: 0;
		height: 3px;
		background: #ccc;
	}

	.track li:last-child::after {
		left: 0;
		right: 13px;
	}

	.feature {
		position: relative;
		display: flex;
		align-items: center;
		justify-content: center;
		width: 28px;
		height: 28px;
		margin-top: -2px;
		border-radius: 2px;
	}

	.feature svg {
		width: 18px;
		height: 18px;
		margin-top: -2px;
	}

	.on .feature {
		background: #0696d7;
	}

	.ticks {
		position: absolute;
		top: -9px;
		width: 18px;
		height: 7px;
	}

	.playhead {
		position: absolute;
		top: 11px;
		right: -8px;
		width: 14px;
		height: 39px;
	}

	.settings {
		width: 184px;
		justify-content: flex-end;
		box-sizing: border-box;
		padding-right: 17px;
	}

	/* text command console */
	.console {
		display: flex;
		flex-direction: column;
		height: 105px;
		box-sizing: border-box;
		overflow: hidden;
		border: 1px solid #ccc;
		border-bottom: 0;
		background: #f1f1f1;
	}

	.console header {
		display: flex;
		align-items: center;
		gap: 11px;
		height: 28px;
		padding-left: 6px;
		flex: none;
	}

	.output {
		display: flex;
		justify-content: space-between;
		height: 55px;
		box-sizing: border-box;
		flex: none;
		margin: 0 1px;
		padding-right: 1px;
		border: 1px solid #777;
		border-right: 0;
		background: #fff;
	}

	pre {
		padding-left: 23px;
		font: 14px/17px 'Liberation Mono', monospace;
		color: #111;
	}

	.scroll {
		display: flex;
		flex-direction: column;
		justify-content: space-between;
		align-items: center;
		width: 19px;
		background: #f1f1f1;
	}

	.scroll button {
		width: 19px;
		height: 20px;
	}

	.scroll svg {
		width: 10px;
		height: 6px;
		fill: none;
		stroke: #555;
		stroke-width: 2px;
	}

	.scroll-thumb {
		width: 19px;
		height: 12px;
		background: #cdcdcd;
	}

	.entry {
		display: flex;
		gap: 8px;
		height: 19px;
		margin: 2px 7px 0 1px;
	}

	.entry input[type='text'] {
		flex: 1;
		height: 19px;
		box-sizing: border-box;
		padding: 0 4px;
		border: 1px solid #777;
		border-right: 0;
		border-bottom: 0;
		background: #fff;
		font: inherit;
	}

	.entry label {
		display: flex;
		align-items: center;
		gap: 8px;
		font: 13px/18px 'Noto Sans', sans-serif;
		color: #111;
	}

	.entry input[type='radio'] {
		appearance: none;
		width: 13px;
		height: 13px;
		box-sizing: border-box;
		margin: 0;
		border: 1px solid #333;
		border-radius: 50%;
		background: #fff;
	}

	.entry input[type='radio']:checked {
		border: 3px solid #fff;
		outline: 1px solid #333;
		outline-offset: -1px;
		background: #333;
	}

	.taskbar {
		display: flex;
		height: 9px;
		background: #101010;
	}

	.taskbar span {
		width: 58px;
		margin-left: 527px;
		background: #333;
	}
</style>
